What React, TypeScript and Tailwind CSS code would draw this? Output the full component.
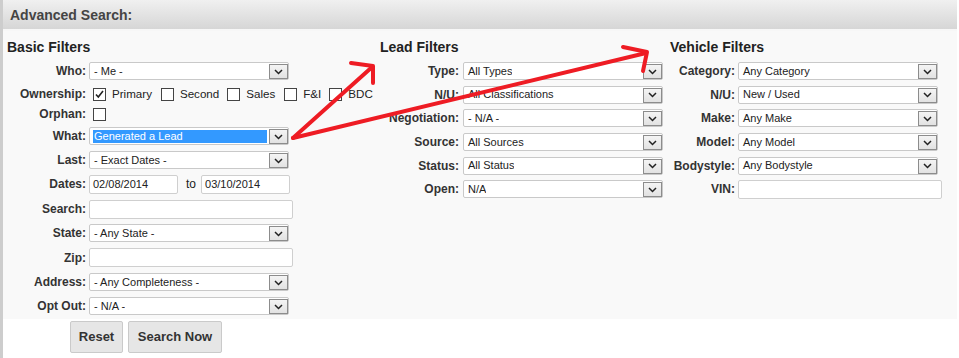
import React from "react";

const FONT = { fontFamily: '"Liberation Sans", Arial, sans-serif' };

function Chevron() {
  return (
    <svg width="9" height="6" viewBox="0 0 9 6" className="block">
      <path d="M1 1 L4.5 4.5 L8 1" fill="none" stroke="#222" strokeWidth="1.5" />
    </svg>
  );
}

function Select({
  value,
  width = 200,
  selected = false,
}: {
  value: string;
  width?: number;
  selected?: boolean;
}) {
  return (
    <div
      className="relative h-[18px] bg-white border border-[#c9c9c9] rounded-[2px] flex items-center"
      style={{ width }}
    >
      {selected ? (
        <div className="ml-[3px] h-[13px] flex items-center bg-[#3399ff] text-white text-[11px] leading-none pl-[1px]" style={{ width: width - 26 }}>
          {value}
        </div>
      ) : (
        <span className="pl-[4px] text-[11px] leading-none text-[#222] whitespace-nowrap overflow-hidden">{value}</span>
      )}
      <div className="absolute right-[0px] top-[1px] w-[19px] h-[15px] border border-[#8c8c8c] bg-gradient-to-b from-[#f4f4f4] to-[#e2e2e2] flex items-center justify-center">
        <Chevron />
      </div>
    </div>
  );
}

function Input({ value = "", width }: { value?: string; width: number }) {
  return (
    <div
      className="h-[19px] bg-white border border-[#cfcfcf] rounded-[2px] flex items-center pl-[3px] text-[11px] leading-none text-[#222]"
      style={{ width }}
    >
      {value}
    </div>
  );
}

function Check({ checked = false }: { checked?: boolean }) {
  return (
    <span className="w-[13px] h-[13px] border border-[#444] bg-white flex items-center justify-center shrink-0">
      {checked && (
        <svg width="11" height="11" viewBox="0 0 11 11">
          <path d="M2 5.5 L4.3 8 L9 2" fill="none" stroke="#222" strokeWidth="1.6" />
        </svg>
      )}
    </span>
  );
}

function Row({
  label,
  labelW,
  gap,
  h,
  children,
}: {
  label: string;
  labelW: number;
  gap: number;
  h: number;
  children: React.ReactNode;
}) {
  return (
    <div className="flex items-center" style={{ height: h }}>
      <div
        className="text-right font-bold text-[12px] leading-none text-[#333] whitespace-nowrap shrink-0"
        style={{ width: labelW, marginRight: gap }}
      >
        {label}
      </div>
      {children}
    </div>
  );
}

function Heading({ children }: { children: React.ReactNode }) {
  return <div className="h-[18px] flex items-center font-bold text-[14px] text-[#222] leading-none">{children}</div>;
}

export default function App() {
  const heights = [24, 23, 24, 24, 23, 24];
  return (
    <div className="relative w-[959px] h-[358px] bg-white overflow-hidden" style={FONT}>
      <div className="w-[957px] border-l-[3px] border-[#cdcdcd] h-[358px] flex flex-col">
        {/* header */}
        <div className="h-[31px] bg-gradient-to-b from-[#f0f0f0] to-[#d6d6d6] flex items-center pl-[7px] border-b-[2px] border-[#f7f7f7]">
          <span className="font-bold text-[14px] text-[#444] leading-none">Advanced Search:</span>
        </div>
        {/* body */}
        <div className="bg-[#f9f9f9] h-[288px] flex pt-[7px] pl-[4px]">
          {/* Basic */}
          <div className="w-[373px] flex flex-col">
            <Heading>Basic Filters</Heading>
            <div className="mt-[3px] flex flex-col">
              <Row label="Who:" labelW={79} gap={3} h={24}>
                <Select value="- Me -" />
              </Row>
              <Row label="Ownership:" labelW={79} gap={7} h={22}>
                <div className="flex items-center text-[11.6px] text-[#222] leading-none">
                  <Check checked />
                  <span className="ml-[6px]">Primary</span>
                  <span className="ml-[9px]"><Check /></span>
                  <span className="ml-[6px]">Second</span>
                  <span className="ml-[8px]"><Check /></span>
                  <span className="ml-[6px]">Sales</span>
                  <span className="ml-[9px]"><Check /></span>
                  <span className="ml-[6px]">F&amp;I</span>
                  <span className="ml-[8px]"><Check /></span>
                  <span className="ml-[6px]">BDC</span>
                </div>
              </Row>
              <Row label="Orphan:" labelW={79} gap={7} h={18}>
                <Check />
              </Row>
              <Row label="What:" labelW={79} gap={3} h={26}>
                <Select value="Generated a Lead" selected />
              </Row>
              <Row label="Last:" labelW={79} gap={3} h={22}>
                <Select value="- Exact Dates -" />
              </Row>
              <Row label="Dates:" labelW={79} gap={3} h={26}>
                <Input value="02/08/2014" width={89} />
                <span className="ml-[8px] mr-[5px] text-[12px] text-[#222]">to</span>
                <Input value="03/10/2014" width={89} />
              </Row>
              <Row label="Search:" labelW={79} gap={3} h={24}>
                <Input width={204} />
              </Row>
              <Row label="State:" labelW={79} gap={3} h={24}>
                <Select value="- Any State -" />
              </Row>
              <Row label="Zip:" labelW={79} gap={3} h={25}>
                <Input width={204} />
              </Row>
              <Row label="Address:" labelW={79} gap={3} h={24}>
                <Select value="- Any Completeness -" />
              </Row>
              <Row label="Opt Out:" labelW={79} gap={3} h={24}>
                <Select value="- N/A -" />
              </Row>
            </div>
          </div>
          {/* Lead */}
          <div className="w-[290px] flex flex-col">
            <Heading>Lead Filters</Heading>
            <div className="mt-[3px] flex flex-col">
              {[
                ["Type:", "All Types"],
                ["N/U:", "All Classifications"],
                ["Negotiation:", "- N/A -"],
                ["Source:", "All Sources"],
                ["Status:", "All Status"],
                ["Open:", "N/A"],
              ].map(([l, v], i) => (
                <Row key={l} label={l} labelW={79} gap={4} h={heights[i]}>
                  <Select value={v} />
                </Row>
              ))}
            </div>
          </div>
          {/* Vehicle */}
          <div className="flex flex-col">
            <Heading>Vehicle Filters</Heading>
            <div className="mt-[3px] flex flex-col">
              {[
                ["Category:", "Any Category"],
                ["N/U:", "New / Used"],
                ["Make:", "Any Make"],
                ["Model:", "Any Model"],
                ["Bodystyle:", "Any Bodystyle"],
              ].map(([l, v], i) => (
                <Row key={l} label={l} labelW={65} gap={3} h={heights[i]}>
                  <Select value={v} />
                </Row>
              ))}
              <Row label="VIN:" labelW={65} gap={3} h={24}>
                <Input width={204} />
              </Row>
            </div>
          </div>
        </div>
        {/* buttons */}
        <div className="flex gap-[5px] pl-[67px] pt-[2px]">
          <button className="h-[32px] w-[53px] bg-[#e6e6e6] border border-[#cacaca] rounded-[2px] font-bold text-[13px] text-[#333]">
            Reset
          </button>
          <button className="h-[32px] w-[94px] bg-[#e6e6e6] border border-[#cacaca] rounded-[2px] font-bold text-[13px] text-[#333]">
            Search Now
          </button>
        </div>
      </div>
      {/* red annotation arrows */}
      <svg className="absolute left-0 top-0 pointer-events-none" width="959" height="358" viewBox="0 0 959 358">
        <g fill="none" stroke="#ee1c24" strokeWidth="4" strokeLinecap="round" strokeLinejoin="round">
          <path d="M293 138 L371 68" />
          <path d="M351 63 L373 66 L373 83" />
          <path d="M293 138 L646 53" />
          <path d="M623 47 L647 52 L643 71" />
        </g>
      </svg>
    </div>
  );
}
